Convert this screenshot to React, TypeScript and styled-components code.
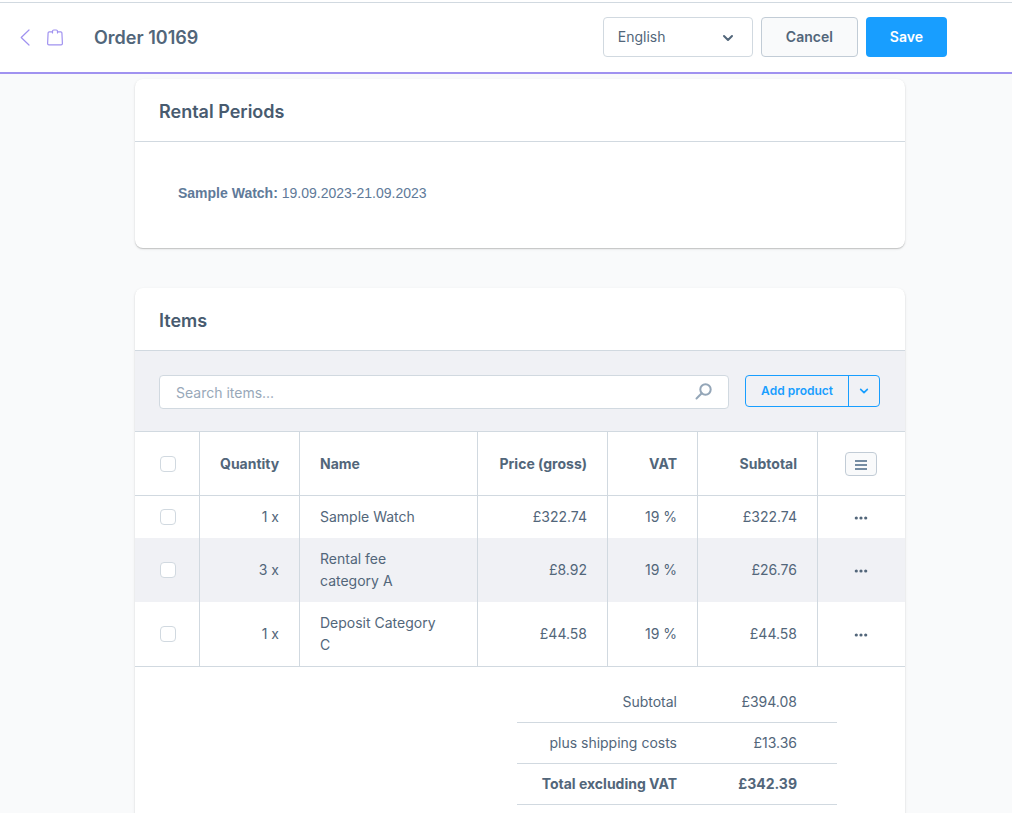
import React from "react";
import styled, { createGlobalStyle } from "styled-components";

const color = {
  text: "#52667a",
  heading: "#485b6f",
  muted: "#758ca3",
  border: "#d1d9e0",
  page: "#f9fafb",
  stripe: "#f0f1f5",
  primary: "#189eff",
  module: "#a092f0",
};

const GlobalStyle = createGlobalStyle`
  *, *::before, *::after { box-sizing: border-box; }
  body {
    margin: 0;
    background: ${color.page};
    color: ${color.text};
    font-family: Inter, "Liberation Sans", sans-serif;
    font-size: 14px;
    line-height: 22px;
  }
  button, input, select { font: inherit; color: inherit; }
`;

const Page = styled.div`
  display: flex;
  flex-direction: column;
  height: 100vh;
  padding-top: 2px;
  background: #fff;
`;

const Header = styled.header`
  display: flex;
  flex: none;
  align-items: center;
  padding: 14px 65px 15px 20px;
  border-top: 1px solid ${color.border};
  border-bottom: 2px solid ${color.module};
  background: #fff;
`;

const BackLink = styled.a`
  display: flex;
  align-items: center;
  gap: 16px;
  margin-right: 31px;
  color: ${color.module};
  svg { display: block; }
`;

const PageTitle = styled.h1`
  flex: 1;
  margin: 0;
  padding-top: 2px;
  font-size: 18px;
  font-weight: 600;
  line-height: 24px;
`;

const Actions = styled.div`
  display: flex;
  gap: 8px;
`;

const SelectBox = styled.div`
  position: relative;
  width: 150px;
  svg {
    position: absolute;
    top: 15px;
    right: 19px;
    pointer-events: none;
  }
`;

const LanguageSelect = styled.select`
  appearance: none;
  width: 100%;
  height: 40px;
  padding: 0 40px 0 14px;
  border: 1px solid ${color.border};
  border-radius: 4px;
  background: #fff;
`;

const Button = styled.button<{ $primary?: boolean }>`
  height: 40px;
  padding: 0 24px;
  border: ${(p) => (p.$primary ? "0" : "1px solid #c2ccd6")};
  border-radius: 4px;
  background: ${(p) => (p.$primary ? color.primary : color.page)};
  color: ${(p) => (p.$primary ? "#fff" : color.text)};
  font-weight: 600;
`;

const Main = styled.main`
  display: flex;
  flex: 1;
  flex-direction: column;
  gap: 40px;
  min-height: 0;
  padding: 5px 107px 40px 135px;
  overflow-y: auto;
  scrollbar-width: none;
  background: ${color.page};
`;

const Card = styled.section`
  flex: none;
  border-radius: 8px;
  background: #fff;
  box-shadow: 0 1px 1px rgba(0, 0, 0, 0.16), 0 1px 3px rgba(0, 0, 0, 0.1);
`;

const CardTitle = styled.h2`
  margin: 0;
  padding: 21px 24px 17px;
  border-bottom: 1px solid ${color.border};
  color: ${color.heading};
  font-size: 18px;
  font-weight: 600;
  line-height: 24px;
`;

const Periods = styled.p`
  margin: 0;
  padding: 40px 43px 44px;
  color: #607a99;
  font-family: "Liberation Sans", Arial, sans-serif;
`;

const Toolbar = styled.div`
  display: flex;
  align-items: flex-start;
  gap: 16px;
  padding: 24px 25px 22px 24px;
  background: ${color.stripe};
`;

const SearchField = styled.label`
  position: relative;
  flex: 1;
  svg {
    position: absolute;
    top: 8px;
    right: 17px;
    color: #94a6b8;
  }
`;

const SearchInput = styled.input`
  display: block;
  width: 100%;
  height: 34px;
  padding: 0 48px 0 16px;
  border: 1px solid ${color.border};
  border-radius: 4px;
  background: #fff;
  &::placeholder { color: #98a8b9; opacity: 1; }
`;

const SplitButton = styled.div`
  display: flex;
  height: 32px;
  border: 1px solid ${color.primary};
  border-radius: 4px;
`;

const SplitPart = styled.button<{ $toggle?: boolean }>`
  display: flex;
  align-items: center;
  padding: ${(p) => (p.$toggle ? "0 10px" : "0 15px")};
  border: 0;
  border-left: ${(p) => (p.$toggle ? `1px solid ${color.primary}` : "0")};
  background: transparent;
  color: ${color.primary};
  font-size: 12px;
  font-weight: 600;
`;

const Grid = styled.table`
  width: 100%;
  border-spacing: 0;
  table-layout: fixed;
`;

const Row = styled.tr<{ $striped?: boolean }>`
  background: ${(p) => (p.$striped ? color.stripe : "#fff")};
`;

const HeadCell = styled.th<{ $width?: number; $align?: string }>`
  width: ${(p) => (p.$width ? `${p.$width}px` : "auto")};
  height: 65px;
  padding: 0 20px;
  border: solid ${color.border};
  border-width: 1px 1px 1px 0;
  font-weight: 700;
  text-align: ${(p) => p.$align ?? "right"};
  &:first-child { padding: 0 0 0 25px; }
  &:last-child { padding: 0 1px 0 0; border-right: 0; }
`;

const Cell = styled.td<{ $align?: string }>`
  padding: 10px 20px;
  border-right: 1px solid ${color.border};
  text-align: ${(p) => p.$align ?? "right"};
  &:first-child { padding: 0 0 0 25px; }
  &:nth-child(3) { padding-right: 36px; }
  &:last-child { padding: 2px 1px 0 0; border-right: 0; }
`;

const Checkbox = styled.input`
  display: block;
  appearance: none;
  width: 16px;
  height: 16px;
  margin: 0;
  border: 1px solid ${color.border};
  border-radius: 4px;
  background: #fff;
  &:checked { background: ${color.primary}; border-color: ${color.primary}; }
`;

const IconButton = styled.button<{ $framed?: boolean }>`
  display: flex;
  align-items: center;
  justify-content: center;
  width: 32px;
  height: ${(p) => (p.$framed ? "24px" : "22px")};
  margin: 0 auto;
  padding: ${(p) => (p.$framed ? "2px 0 0" : "0")};
  border: ${(p) => (p.$framed ? "1px solid #c2ccd6" : "0")};
  border-radius: 4px;
  background: ${(p) => (p.$framed ? color.page : "transparent")};
`;

const SummaryArea = styled.div`
  display: flex;
  justify-content: flex-end;
  padding: 15px 68px 40px 24px;
  border-top: 1px solid ${color.border};
`;

const Summary = styled.dl`
  width: 320px;
  margin: 0;
`;

const SummaryRow = styled.div<{ $strong?: boolean }>`
  display: grid;
  grid-template-columns: 160px 1fr;
  padding: 9px 40px 9px 0;
  border-bottom: 1px solid ${color.border};
  font-weight: ${(p) => (p.$strong ? 700 : 400)};
  text-align: right;
  dt { white-space: nowrap; }
  dd { margin: 0; }
`;

const Chevron = ({ size, stroke }: { size: number; stroke: number }) => (
  <svg width={size} height={size} viewBox="0 0 12 12" fill="none" stroke="currentColor" strokeWidth={stroke} strokeLinecap="round" strokeLinejoin="round" aria-hidden="true">
    <path d="M2 4l4 4 4-4" />
  </svg>
);

const BackIcon = () => (
  <svg width="11" height="17" viewBox="0 0 11 17" fill="none" stroke="currentColor" strokeWidth="1.2" strokeLinecap="round" strokeLinejoin="round" aria-hidden="true">
    <path d="M9 1L1.2 8.5 9 16" />
  </svg>
);

const BagIcon = () => (
  <svg width="16" height="17" viewBox="0 0 16 17" fill="none" stroke="currentColor" strokeWidth="1.2" strokeLinecap="round" strokeLinejoin="round" aria-hidden="true">
    <path d="M5.5 2.800H2.200q-1 0-1.100 1L.6 14.500q0 1.400 1.300 1.400h12.200q1.300 0 1.300-1.400L14.900 3.800q-.1-1-1.100-1h-3.300" />
    <path d="M5.500 3.900V2.300Q5.500 1 6.800 1h2.400q1.300 0 1.300 1.300v1.600" />
  </svg>
);

const SearchIcon = () => (
  <svg width="17" height="17" viewBox="0 0 17 17" fill="none" stroke="currentColor" strokeWidth="2" strokeLinecap="round" aria-hidden="true">
    <circle cx="10.500" cy="6.500" r="5.200" />
    <path d="M6.700 10.300L1.500 15.500" />
  </svg>
);

const ListIcon = () => (
  <svg width="12" height="10" viewBox="0 0 12 10" fill={color.muted} aria-hidden="true">
    <path d="M0 0h12v2H0zM0 4h12v2H0zM0 8h12v2H0z" />
  </svg>
);

const DotsIcon = () => (
  <svg width="14" height="4" viewBox="0 0 14 4" fill="currentColor" aria-hidden="true">
    <circle cx="2.300" cy="2" r="1.600" />
    <circle cx="7" cy="2" r="1.600" />
    <circle cx="11.700" cy="2" r="1.600" />
  </svg>
);

const items = [
  { quantity: "1 x", name: "Sample Watch", price: "£322.74", vat: "19 %", subtotal: "£322.74" },
  { quantity: "3 x", name: "Rental fee category A", price: "£8.92", vat: "19 %", subtotal: "£26.76" },
  { quantity: "1 x", name: "Deposit Category C", price: "£44.58", vat: "19 %", subtotal: "£44.58" },
];

const totals = [
  { label: "Subtotal", value: "£394.08" },
  { label: "plus shipping costs", value: "£13.36" },
  { label: "Total excluding VAT", value: "£342.39", strong: true },
];

export default function App() {
  return (
    <>
      <GlobalStyle />
      <Page>
        <Header>
          <BackLink href="#orders" aria-label="Back to orders">
            <BackIcon />
            <BagIcon />
          </BackLink>
          <PageTitle>Order 10169</PageTitle>
          <Actions>
            <SelectBox>
              <LanguageSelect aria-label="Language" defaultValue="en">
                <option value="en">English</option>
              </LanguageSelect>
              <Chevron size={12} stroke={2} />
            </SelectBox>
            <Button type="button">Cancel</Button>
            <Button type="button" $primary>Save</Button>
          </Actions>
        </Header>
        <Main>
          <Card>
            <CardTitle>Rental Periods</CardTitle>
            <Periods>
              <strong>Sample Watch:</strong> 19.09.2023-21.09.2023
            </Periods>
          </Card>
          <Card>
            <CardTitle>Items</CardTitle>
            <Toolbar>
              <SearchField>
                <SearchInput type="text" placeholder="Search items..." aria-label="Search items" />
                <SearchIcon />
              </SearchField>
              <SplitButton>
                <SplitPart type="button">Add product</SplitPart>
                <SplitPart type="button" $toggle aria-label="More ways to add">
                  <Chevron size={10} stroke={2} />
                </SplitPart>
              </SplitButton>
            </Toolbar>
            <Grid>
              <thead>
                <Row>
                  <HeadCell $width={65}><Checkbox type="checkbox" aria-label="Select all items" /></HeadCell>
                  <HeadCell $width={100}>Quantity</HeadCell>
                  <HeadCell $align="left">Name</HeadCell>
                  <HeadCell $width={130}>Price (gross)</HeadCell>
                  <HeadCell $width={90}>VAT</HeadCell>
                  <HeadCell $width={120}>Subtotal</HeadCell>
                  <HeadCell $width={87}>
                    <IconButton type="button" $framed aria-label="Column settings"><ListIcon /></IconButton>
                  </HeadCell>
                </Row>
              </thead>
              <tbody>
                {items.map((item, i) => (
                  <Row key={item.name} $striped={i % 2 === 1}>
                    <Cell><Checkbox type="checkbox" aria-label={`Select ${item.name}`} /></Cell>
                    <Cell>{item.quantity}</Cell>
                    <Cell $align="left">{item.name}</Cell>
                    <Cell>{item.price}</Cell>
                    <Cell>{item.vat}</Cell>
                    <Cell>{item.subtotal}</Cell>
                    <Cell>
                      <IconButton type="button" aria-label={`Actions for ${item.name}`}><DotsIcon /></IconButton>
                    </Cell>
                  </Row>
                ))}
              </tbody>
            </Grid>
            <SummaryArea>
              <Summary>
                {totals.map((t) => (
                  <SummaryRow key={t.label} $strong={t.strong}>
                    <dt>{t.label}</dt>
                    <dd>{t.value}</dd>
                  </SummaryRow>
                ))}
              </Summary>
            </SummaryArea>
          </Card>
        </Main>
      </Page>
    </>
  );
}
